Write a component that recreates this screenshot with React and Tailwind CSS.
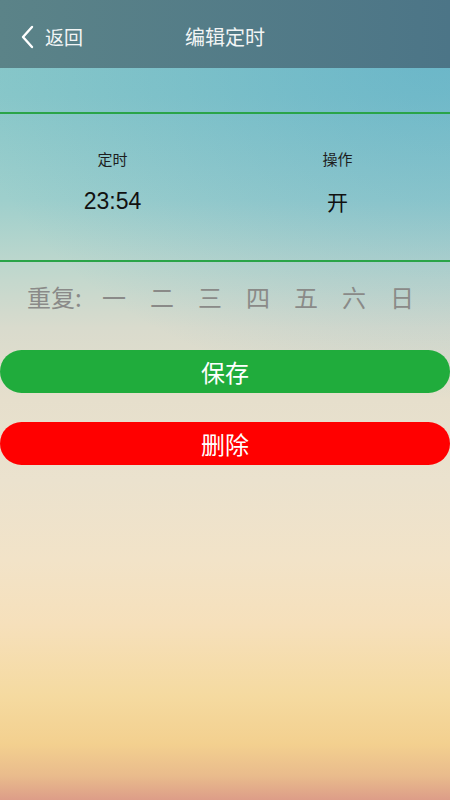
import React from "react";

export default function App() {
  const days = ["一", "二", "三", "四", "五", "六", "日"];
  return (
    <div
      className="w-[450px] h-[800px] flex flex-col overflow-hidden bg-[radial-gradient(ellipse_110%_45%_at_100%_5%,rgba(60,155,200,0.4)_0%,rgba(60,155,200,0)_100%),linear-gradient(to_bottom,#86c7c8_0%,#8ac8c9_12%,#9ecfcc_25%,#bdd7cd_33%,#d9dbcd_41%,#e6dfcc_50%,#ebe2ce_60%,#f2e3c8_70%,#f6e0bb_78%,#f5daa0_87%,#f3d08f_93%,#e9bb8c_97%,#dd9d88_100%)]"
      style={{ fontFamily: '"Noto Sans CJK SC", "Noto Sans", sans-serif' }}
    >
      {/* Header */}
      <div className="h-[68px] shrink-0 flex items-center relative pt-[5px] bg-gradient-to-r from-[#5b8388] to-[#4c7587]">
        <div className="flex items-center pl-[21px]">
          <svg width="14" height="24" viewBox="0 0 14 24" className="mr-[10px]">
            <polyline
              points="11,2 2,12 11,22"
              fill="none"
              stroke="white"
              strokeWidth="2.4"
              strokeLinecap="round"
              strokeLinejoin="round"
            />
          </svg>
          <span className="text-[#f2f5f5] text-[19px] leading-none">返回</span>
        </div>
        <div className="absolute left-0 right-0 top-0 h-full pt-[5px] flex items-center justify-center pointer-events-none">
          <span className="text-[#f2f5f5] text-[20px] leading-none">编辑定时</span>
        </div>
      </div>

      {/* spacer */}
      <div className="h-[44px] shrink-0" />
      <div className="h-[2px] shrink-0 bg-[#2aa449]" />

      {/* Timer section */}
      <div className="h-[146px] shrink-0 flex pt-[34px]">
        <div className="w-1/2 flex flex-col items-center">
          <span className="text-[15px] leading-[22px] text-[#1e1e1e]">定时</span>
          <span
            className="mt-[15px] text-[23px] leading-[32px] text-[#111]"
            style={{ fontFamily: '"Liberation Sans", "Noto Sans CJK SC", sans-serif' }}
          >
            23:54
          </span>
        </div>
        <div className="w-1/2 flex flex-col items-center">
          <span className="text-[15px] leading-[22px] text-[#1e1e1e]">操作</span>
          <span className="mt-[15px] text-[21px] leading-[32px] text-[#111]">开</span>
        </div>
      </div>
      <div className="h-[2px] shrink-0 bg-[#2aa449]" />

      {/* Repeat row */}
      <div className="h-[70px] shrink-0 flex items-center pl-[27px] text-[#8a8a88] text-[24px]">
        <span className="w-[63px] leading-none">重复:</span>
        {days.map((d) => (
          <span key={d} className="w-[48px] text-center leading-none">
            {d}
          </span>
        ))}
      </div>

      {/* Buttons */}
      <div className="flex flex-col mt-[18px] gap-[29px]">
        <button className="h-[43px] w-full rounded-full bg-[#20ac3c] text-white text-[24px] leading-none flex items-center justify-center">
          保存
        </button>
        <button className="h-[43px] w-full rounded-full bg-[#ff0000] text-white text-[24px] leading-none flex items-center justify-center">
          删除
        </button>
      </div>
    </div>
  );
}
